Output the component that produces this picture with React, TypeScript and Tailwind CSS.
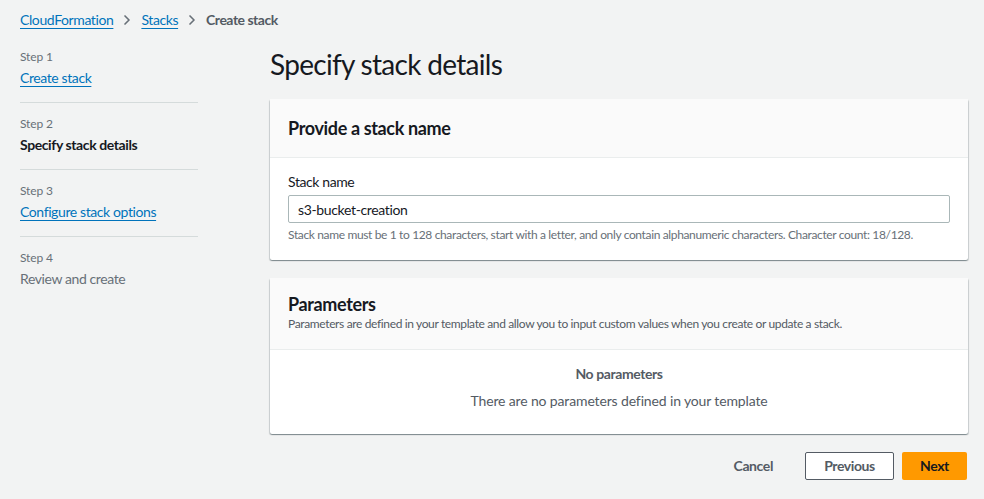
import { ChevronRight } from "lucide-react";

const STEPS = [
  { step: "Step 1", label: "Create stack", state: "link" },
  { step: "Step 2", label: "Specify stack details", state: "current" },
  { step: "Step 3", label: "Configure stack options", state: "link" },
  { step: "Step 4", label: "Review and create", state: "disabled" },
] as const;

const cardShadow =
  "shadow-[0_1px_1px_0_rgba(0,28,36,0.3),1px_1px_1px_0_rgba(0,28,36,0.15),-1px_1px_1px_0_rgba(0,28,36,0.15)]";

export default function App() {
  return (
    <div className="min-h-[499px] bg-[#f2f3f3] font-['Lato','Noto_Sans',sans-serif] tracking-[-0.025em] text-[#16191f]">
      <nav className="flex items-center gap-[6px] px-5 pt-[10px] text-sm">
        <a className="text-[#0073bb] underline underline-offset-[3px]">CloudFormation</a>
        <ChevronRight size={16} strokeWidth={2.5} className="text-[#687078]" />
        <a className="text-[#0073bb] underline underline-offset-[3px]">Stacks</a>
        <ChevronRight size={16} strokeWidth={2.5} className="text-[#687078]" />
        <span className="font-bold tracking-[-0.035em] text-[#545b64]">Create stack</span>
      </nav>

      <div className="flex gap-[72px] pl-5 pr-4 pt-[19px]">
        <ol className="w-[178px] shrink-0">
          {STEPS.map((s, i) => (
            <li
              key={s.step}
              className={`pb-[14px] ${i > 0 ? "pt-[13px]" : ""} ${
                i < STEPS.length - 1 ? "border-b border-[#d5dbdb]" : ""
              }`}
            >
              <div className="text-xs leading-4 tracking-[-0.01em] text-[#687078]">{s.step}</div>
              <div
                className={`mt-[3px] text-sm leading-5 ${
                  s.state === "link"
                    ? "text-[#0073bb] underline underline-offset-[3px]"
                    : s.state === "current"
                    ? "font-bold text-[#16191f]"
                    : "text-[#687078]"
                }`}
              >
                {s.label}
              </div>
            </li>
          ))}
        </ol>

        <main className="flex-1">
          <h1 className="text-[28px] leading-[30px] font-normal tracking-[-0.025em] text-[#16191f]">
            Specify stack details
          </h1>

          <section className={`mt-[20px] rounded-[2px] bg-white ${cardShadow}`}>
            <div className="border-b border-[#eaeded] bg-[#fafafa] px-[18px] py-[17px]">
              <h2 className="text-[18px] leading-6 font-bold tracking-[-0.02em]">Provide a stack name</h2>
            </div>
            <div className="px-[18px] pt-[14px] pb-[17px]">
              <label className="block text-sm leading-5">Stack name</label>
              <input
                readOnly
                value="s3-bucket-creation"
                className="mt-[3px] block h-[28px] w-full rounded-[2px] border border-[#aab7b8] px-[9px] text-sm tracking-[-0.025em] text-[#16191f] outline-none"
              />
              <p className="mt-[4px] text-xs leading-4 tracking-[-0.03em] text-[#687078]">
                Stack name must be 1 to 128 characters, start with a letter, and only contain
                alphanumeric characters. Character count: 18/128.
              </p>
            </div>
          </section>

          <section className={`mt-[18px] rounded-[2px] bg-white ${cardShadow}`}>
            <div className="border-b border-[#eaeded] bg-[#fafafa] px-[18px] pt-[14px] pb-[17px]">
              <h2 className="text-[18px] leading-6 font-bold tracking-[-0.02em]">Parameters</h2>
              <p className="text-xs leading-4 tracking-[-0.03em] text-[#545b64]">
                Parameters are defined in your template and allow you to input custom values when
                you create or update a stack.
              </p>
            </div>
            <div className="px-[18px] pt-[14px] pb-[23px] text-center text-sm text-[#545b64]">
              <div className="font-bold leading-5">No parameters</div>
              <div className="mt-[7px] leading-5 tracking-[-0.01em]">There are no parameters defined in your template</div>
            </div>
          </section>

          <div className="mt-[18px] flex items-center justify-end gap-2 pr-[1px]">
            <button className="h-[28px] px-5 text-sm font-bold text-[#545b64]">Cancel</button>
            <button className="ml-[4px] h-[28px] w-[89px] rounded-[2px] border border-[#545b64] bg-white text-sm font-bold text-[#545b64]">
              Previous
            </button>
            <button className="h-[28px] w-[65px] rounded-[2px] bg-[#ff9900] text-sm font-bold text-[#16191f]">
              Next
            </button>
          </div>
        </main>
      </div>
    </div>
  );
}
